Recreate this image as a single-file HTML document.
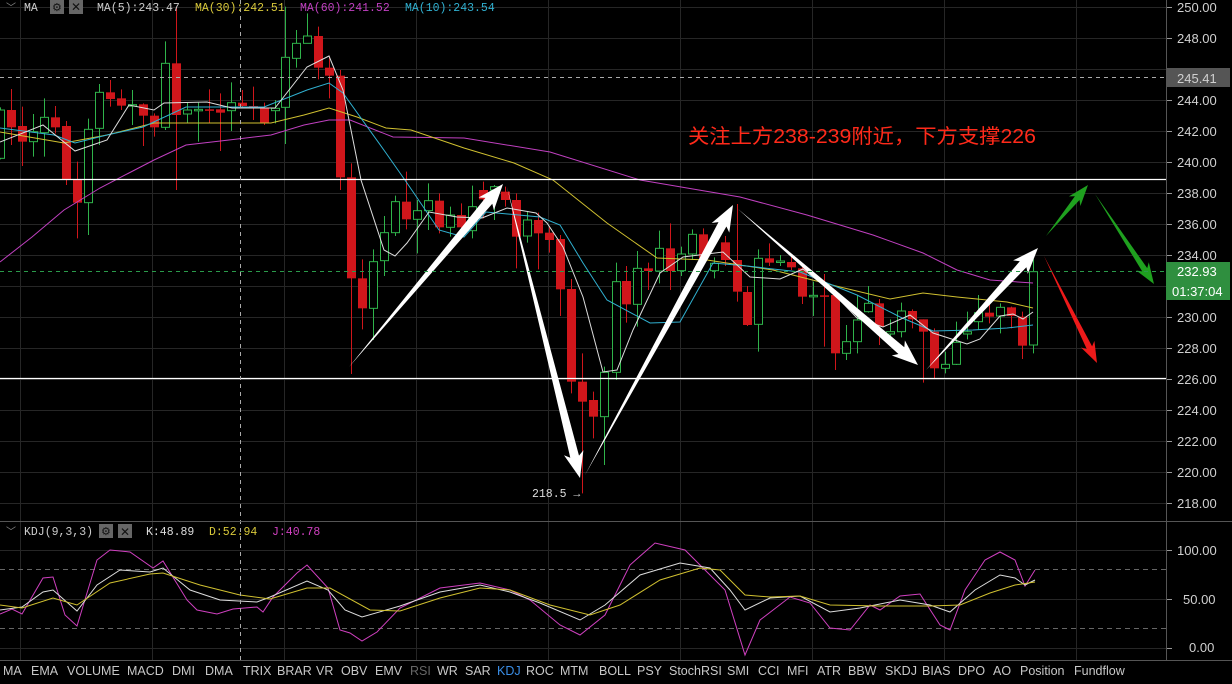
<!DOCTYPE html>
<html><head><meta charset="utf-8">
<style>
html,body{margin:0;padding:0;background:#000;}
body{width:1232px;height:684px;overflow:hidden;position:relative;font-family:"Liberation Sans","Noto Sans CJK SC",sans-serif;}
svg{position:absolute;left:0;top:0;}
.ax{font-family:"Liberation Sans",sans-serif;font-size:13px;fill:#d0d0d0;}
.mono{font-family:"Liberation Mono","DejaVu Sans Mono",monospace;font-size:11.5px;}
.tab{font-family:"Liberation Sans",sans-serif;font-size:12.5px;fill:#c8c8c8;}
</style></head><body>
<svg id="s" width="1232" height="684" viewBox="0 0 1232 684" xmlns="http://www.w3.org/2000/svg">
<g id="grid" stroke="#262626" stroke-width="1"></g>
<g id="lines"></g>
<g id="candles"></g>
<g id="ma" fill="none" stroke-width="1"></g>
<g id="kdj" fill="none" stroke-width="1"></g>
<g id="arrows"></g>
<line x1="0" y1="179.5" x2="1166" y2="179.5" stroke="#fff" stroke-width="1.2"/>
<line x1="0" y1="378.5" x2="1166" y2="378.5" stroke="#fff" stroke-width="1.2"/>
<line x1="0" y1="77.5" x2="1166" y2="77.5" stroke="#aaa" stroke-dasharray="4,4"/>
<line x1="0" y1="271.5" x2="1166" y2="271.5" stroke="#2a9a4a" stroke-dasharray="4,4"/>
<line x1="240.5" y1="0" x2="240.5" y2="660" stroke="#aaa" stroke-dasharray="4,4"/>
<line x1="0" y1="521.5" x2="1232" y2="521.5" stroke="#555"/>
<line x1="0" y1="660.5" x2="1232" y2="660.5" stroke="#555"/>
<line x1="1166.5" y1="0" x2="1166.5" y2="660" stroke="#555"/>
<g id="axis"></g>
<rect x="1166" y="68" width="64" height="19" fill="#555"/>
<text x="1177" y="83" class="ax" fill="#e0e0e0">245.41</text>
<rect x="1166" y="262" width="64" height="38" fill="#2f8f3f"/>
<text x="1177" y="276" class="ax" style="fill:#fff">232.93</text>
<text x="1172" y="296" class="ax" style="fill:#fff">01:37:04</text>
<text x="6" y="11" font-size="10" fill="#888">﹀</text>
<text x="24" y="11" class="mono" fill="#ccc">MA</text>
<rect x="50" y="0" width="14" height="14" fill="#666"/><text x="52" y="11" font-size="11" fill="#111">⚙</text>
<rect x="69" y="0" width="14" height="14" fill="#666"/><text x="71" y="11" font-size="12" fill="#111">✕</text>
<text x="97" y="11" class="mono" fill="#ccc">MA(5):243.47</text>
<text x="195" y="11" class="mono" fill="#d8c83a">MA(30):242.51</text>
<text x="300" y="11" class="mono" fill="#c040c0">MA(60):241.52</text>
<text x="405" y="11" class="mono" fill="#30b0d0">MA(10):243.54</text>
<text x="6" y="535" font-size="10" fill="#888">﹀</text>
<text x="24" y="535" class="mono" fill="#ccc">KDJ(9,3,3)</text>
<rect x="99" y="524" width="14" height="14" fill="#666"/><text x="101" y="535" font-size="11" fill="#111">⚙</text>
<rect x="118" y="524" width="14" height="14" fill="#666"/><text x="120" y="536" font-size="12" fill="#111">✕</text>
<text x="146" y="535" class="mono" fill="#ddd">K:48.89</text>
<text x="209" y="535" class="mono" fill="#d8c83a">D:52.94</text>
<text x="272" y="535" class="mono" fill="#d040c0">J:40.78</text>
<text x="532" y="497" class="mono" fill="#ddd" font-size="11">218.5 →</text>
<text x="688" y="143" font-size="20" fill="#ff2a1a" textLength="348" lengthAdjust="spacingAndGlyphs" font-family="'Liberation Sans','Noto Sans CJK SC',sans-serif">关注上方238-239附近，下方支撑226</text>
<g class="tab">
<text x="3" y="675">MA</text><text x="31" y="675">EMA</text><text x="67" y="675">VOLUME</text><text x="127" y="675">MACD</text><text x="172" y="675">DMI</text><text x="205" y="675">DMA</text><text x="243" y="675">TRIX</text><text x="277" y="675">BRAR</text><text x="316" y="675">VR</text><text x="341" y="675">OBV</text><text x="375" y="675">EMV</text><text x="410" y="675" style="fill:#666">RSI</text><text x="437" y="675">WR</text><text x="465" y="675">SAR</text><text x="497" y="675" style="fill:#3a8ee6">KDJ</text><text x="526" y="675">ROC</text><text x="560" y="675">MTM</text><text x="599" y="675">BOLL</text><text x="637" y="675">PSY</text><text x="669" y="675">StochRSI</text><text x="727" y="675">SMI</text><text x="758" y="675">CCI</text><text x="787" y="675">MFI</text><text x="817" y="675">ATR</text><text x="848" y="675">BBW</text><text x="885" y="675">SKDJ</text><text x="922" y="675">BIAS</text><text x="958" y="675">DPO</text><text x="993" y="675">AO</text><text x="1020" y="675">Position</text><text x="1074" y="675">Fundflow</text>
</g>
<g class="ax">
<text x="1177" y="12">250.00</text><text x="1177" y="43">248.00</text><text x="1177" y="105">244.00</text><text x="1177" y="136">242.00</text><text x="1177" y="167">240.00</text><text x="1177" y="198">238.00</text><text x="1177" y="229">236.00</text><text x="1177" y="260">234.00</text><text x="1177" y="322">230.00</text><text x="1177" y="353">228.00</text><text x="1177" y="384">226.00</text><text x="1177" y="415">224.00</text><text x="1177" y="446">222.00</text><text x="1177" y="477">220.00</text><text x="1177" y="508">218.00</text>
<text x="1177" y="555">100.00</text><text x="1183" y="604">50.00</text><text x="1189" y="652">0.00</text>
</g>
</svg>
<script>
var NS="http://www.w3.org/2000/svg";
function el(p,t,a){var e=document.createElementNS(NS,t);for(var k in a)e.setAttribute(k,a[k]);document.getElementById(p).appendChild(e);return e;}
var vx=[20,152,284,416,548,680,812,944,1076];
vx.forEach(function(x){el('grid','line',{x1:x+.5,y1:0,x2:x+.5,y2:660});});
for(var p=0;p<=16;p++){var y=Math.round(7+p*31)+.5;el('grid','line',{x1:0,y1:y,x2:1166,y2:y});el('grid','line',{x1:1166,y1:y,x2:1172,y2:y,stroke:'#999'});}
[550,599,648].forEach(function(y){el('grid','line',{x1:0,y1:y+.5,x2:1166,y2:y+.5});el('grid','line',{x1:1166,y1:y+.5,x2:1172,y2:y+.5,stroke:'#999'});});
[569,628].forEach(function(y){el('lines','line',{x1:0,y1:y+.5,x2:1166,y2:y+.5,stroke:'#666','stroke-dasharray':'5,4'});});
var A=[[270,415,262,418,1],[270,322,207,375,0],[318,365,260,438,0],[335,365,282,410,1],[292,338,235,410,1],[292,322,258,340,0],[318,478,303,495,0],[480,548,425,655,0],[328,548,296,645,1],[217,325,192,375,1],[217,237,180,260,0],[235,257,208,270,0],[254,257,210,315,1],[253,287,250,378,0],[287,322,280,350,0],[130,322,64,330,1],[130,285,-40,510,0],[270,282,248,310,1],[268,272,248,365,1],[268,272,208,308,0],[268,278,220,393,0],[248,272,187,333,1],[248,258,210,265,0],[258,265,200,300,0],[265,310,248,315,0],[265,272,240,310,1],[112,262,-40,372,1],[70,115,30,143,1],[48,70,-20,70,1],[48,143,20,178,0],[143,167,110,235,0],[167,472,150,510,0],[472,775,430,1062,0],[775,865,718,928,0],[725,865,688,960,1],[638,722,588,768,1],[545,638,527,648,1],[545,598,455,628,0],[572,598,540,700,1],[542,572,490,630,1],[542,622,520,640,0],[585,622,560,650,1],[585,622,550,650,0],[560,632,497,655,1],[510,538,485,595,0],[500,510,495,600,1],[515,540,500,560,0],[540,650,520,745,0],[600,648,575,668,1],[600,640,578,748,0]];
var B=[[27,158,180,140,218,0],[61,177,328,165,408,0],[94,327,605,297,640,0],[127,605,665,520,940,0],[160,660,710,635,775,0],[193,577,710,560,855,1],[227,305,577,248,600,1],[259,303,373,258,428,0],[292,265,373,213,440,1],[325,265,273,248,330,0],[358,205,273,152,310,1],[391,205,273,130,330,0],[424,222,272,200,288,1],[457,163,222,148,240,1],[490,163,235,145,245,0],[523,250,272,232,295,1],[556,187,240,168,258,0],[590,240,335,72,365,0],[622,336,435,318,438,0],[655,235,433,208,515,1],[688,235,248,190,258,0],[721,243,246,225,258,1],[754,246,262,230,270,0],[787,265,350,258,372,0],[820,346,350,305,408,1],[853,346,350,282,500,0],[886,345,520,330,570,0],[919,485,520,435,540,1],[952,420,485,345,520,1],[985,370,395,318,398,1],[1018,370,440,357,495,0],[1051,455,462,418,470,1],[1084,393,455,368,472,1],[1117,393,418,388,445,0],[1150,418,455,418,608,0],[1183,455,565,445,595,0],[1216,553,565,515,580,1],[1249,487,553,425,555,1],[1282,455,462,395,478,1],[1315,398,425,345,450,1],[1348,398,410,368,430,0],[1381,382,408,370,460,1],[1414,382,408,380,445,0],[1447,410,497,395,537,0],[1480,275,495,238,520,1]];
function candle(x,bt,bb,wt,wb,c){var col=c?'#2fb34a':'#d0161b';x=Math.round(x);
el('candles','line',{x1:x+.5,y1:wt,x2:x+.5,y2:wb,stroke:col});
var h=Math.max(1.5,bb-bt);
if(c)el('candles','rect',{x:x-3.5,y:bt,width:8,height:h,fill:'#000',stroke:col});
else el('candles','rect',{x:x-4,y:bt,width:9,height:h,fill:col});}
A.forEach(function(d,i){candle(i*10.98,d[0]/3+20,d[1]/3+20,Math.max(0,d[2]/3+20),d[3]/3+20,d[4]);});
B.forEach(function(d){candle(d[0]/3+540,d[1]/3+180,d[2]/3+180,d[3]/3+180,d[4]/3+180,d[5]);});
function pl(g,col,pts,w){el(g,'polyline',{points:pts,stroke:col,'stroke-width':w||1});}
pl('ma','#c040c0',"0,262 32,237 64,210 100,188 154,160 186,145 229,140 271,135 304,125 329,120 350,120 393,137 464,138 550,152 640,180 740,197 807,215 873,235 923,253 957,270 990,280 1033,283");
pl('ma','#d0c030',"0,132 64,143 107,135 154,123 229,123 271,123 304,115 329,108 357,117 386,128 411,130 464,148 514,163 553,180 607,223 657,258 707,260 773,270 840,287 890,299 923,293 957,297 1007,302 1033,308");
pl('ma','#30b0d0',"0,128 54,135 75,143 107,135 143,127 186,107 264,107 307,90 329,83 343,93 386,153 407,183 439,230 464,237 486,212 540,217 560,225 583,263 607,300 650,323 680,322 713,263 747,266 800,272 857,295 900,317 933,331 973,330 1007,328 1033,325");
pl('ma','#dddddd',"0,142 43,125 75,151 107,140 129,105 154,110 164,103 207,102 232,108 275,108 307,67 329,56 343,90 361,180 384,250 395,256 407,243 429,212 457,217 482,218 507,208 536,213 547,223 563,247 583,297 603,372 617,370 633,330 660,273 683,257 723,252 750,277 780,279 803,269 833,293 857,318 883,327 910,315 933,333 967,344 980,339 1000,316 1013,314 1023,319 1033,312");
pl('kdj','#d040c0',"0,614 12,609 22,614 43,578 53,577 65,615 77,626 97,560 110,550 130,552 153,568 163,561 187,600 197,610 217,614 233,609 257,607 263,612 273,597 297,573 307,565 328,588 340,630 350,633 362,641 377,632 400,608 440,588 480,583 510,590 530,600 560,625 580,635 605,615 630,565 655,543 685,550 700,565 725,590 745,655 760,620 790,597 810,603 830,628 850,630 870,605 880,610 900,596 920,594 940,625 950,630 965,590 985,560 1000,552 1015,560 1025,586 1035,570");
pl('kdj','#dddddd',"0,610 22,607 43,592 53,590 77,611 97,585 120,570 150,572 163,568 190,590 220,600 257,602 270,597 307,581 328,590 345,610 362,617 400,606 440,592 480,585 510,592 540,603 580,620 605,605 640,575 680,563 710,568 730,590 745,610 770,598 800,596 830,612 860,608 900,600 930,605 950,612 975,590 1000,575 1015,578 1025,585 1035,580");
pl('kdj','#d0c030',"0,605 22,608 53,598 77,605 110,583 150,574 163,573 200,585 240,595 270,599 307,588 330,588 370,610 400,611 440,598 480,588 510,590 550,605 590,615 620,605 660,580 700,568 720,570 745,595 770,597 800,596 830,605 880,606 930,606 960,605 990,593 1015,585 1035,582");
function arrow(x1,y1,x2,y2,col,w,hw,hl){var dx=x2-x1,dy=y2-y1,L=Math.hypot(dx,dy),ux=dx/L,uy=dy/L,nx=-uy,ny=ux;
var bx=x2-ux*hl,by=y2-uy*hl;
var pts=[[x1,y1],[bx+nx*w/2,by+ny*w/2],[bx+nx*hw/2-ux*4,by+ny*hw/2-uy*4],[x2,y2],[bx-nx*hw/2-ux*4,by-ny*hw/2-uy*4],[bx-nx*w/2,by-ny*w/2]];
el('arrows','polygon',{points:pts.map(function(p){return p[0].toFixed(1)+','+p[1].toFixed(1);}).join(' '),fill:col});}
arrow(349,367,503,184,'#fff',9,20,22);
arrow(507,187,580,478,'#fff',9,20,22);
arrow(585,475,733,205,'#fff',9,20,22);
arrow(738,209,918,365,'#fff',9,20,22);
arrow(926,370,1038,248,'#fff',9,20,22);
arrow(1046,236,1088,185,'#1fa01f',6,15,17);
arrow(1095,194,1154,284,'#1fa01f',6,15,17);
arrow(1044,256,1097,363,'#ee1a1a',6,15,17);
</script>
</body></html>
